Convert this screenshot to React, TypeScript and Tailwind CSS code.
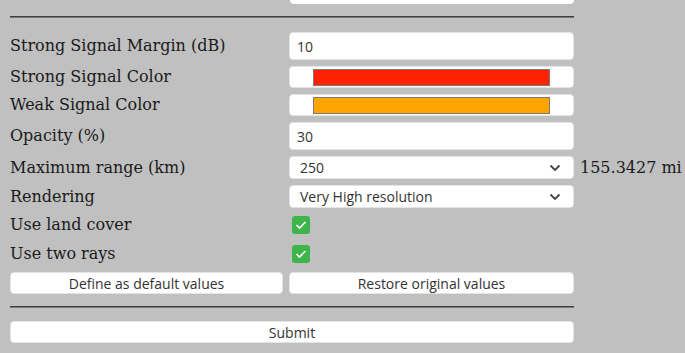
import React from 'react'

const labelCls = 'w-[279px] shrink-0 text-[16px] leading-none text-[#1a1a1a] [font-family:"DejaVu_Serif",serif]'
const ctrlFont = '[font-family:"Open_Sans",sans-serif] text-[14px] text-[#333]'

function Chevron() {
  return (
    <svg width="12" height="8" viewBox="0 0 12 8" className="absolute right-[12px] top-1/2 -translate-y-1/2">
      <path d="M1.5 1.5 L6 6 L10.5 1.5" fill="none" stroke="#444" strokeWidth="1.8" />
    </svg>
  )
}

function Check() {
  return (
    <div className="ml-[3px] w-[18px] h-[18px] rounded-[3px] bg-[#3db54a] flex items-center justify-center">
      <svg width="12" height="10" viewBox="0 0 12 10">
        <path d="M1.5 5 L4.5 8 L10.5 2" fill="none" stroke="#fff" strokeWidth="1.6" />
      </svg>
    </div>
  )
}

function Row({ label, h, mt, children, extra }: { label: string; h: number; mt: string; children: React.ReactNode; extra?: React.ReactNode }) {
  return (
    <div className={`flex items-center ${mt}`} style={{ height: h }}>
      <div className={labelCls}>{label}</div>
      <div className="w-[285px] shrink-0 h-full flex items-center">{children}</div>
      {extra}
    </div>
  )
}

export default function App() {
  const box = 'w-full h-full bg-white border border-[#e4e4e4] rounded-[4px]'
  return (
    <div className="w-[685px] h-[353px] bg-[#c0c0c0] overflow-hidden">
      <div className="pl-[10px] w-[574px]">
        <div className="ml-[280px] h-[4px] bg-white rounded-b-[4px]" />
        <div className="mt-[12px] border-t border-t-[#3c3c3c] border-b border-b-[#7a7a7a]" />

        <Row label="Strong Signal Margin (dB)" h={28} mt="mt-[14px]">
          <div className={`${box} ${ctrlFont} flex items-center pl-[7px]`}>10</div>
        </Row>
        <Row label="Strong Signal Color" h={22} mt="mt-[6px]">
          <div className={`${box} flex items-center pl-[23px]`}>
            <div className="w-[237px] h-[17px] bg-[#ff2200] border border-[#7a7a7a]" />
          </div>
        </Row>
        <Row label="Weak Signal Color" h={22} mt="mt-[6px]">
          <div className={`${box} flex items-center pl-[23px]`}>
            <div className="w-[237px] h-[17px] bg-[#ffa500] border border-[#7a7a7a]" />
          </div>
        </Row>
        <Row label="Opacity (%)" h={28} mt="mt-[6px]">
          <div className={`${box} ${ctrlFont} flex items-center pl-[7px]`}>30</div>
        </Row>
        <Row
          label="Maximum range (km)"
          h={23}
          mt="mt-[6px]"
          extra={<div className="ml-[6px] shrink-0 whitespace-nowrap text-[16px] leading-none text-[#1a1a1a] [font-family:'DejaVu_Serif',serif]">155.3427 mi</div>}
        >
          <div className={`${box} ${ctrlFont} relative flex items-center pl-[10px]`}>
            250
            <Chevron />
          </div>
        </Row>
        <Row label="Rendering" h={23} mt="mt-[6px]">
          <div className={`${box} ${ctrlFont} relative flex items-center pl-[10px]`}>
            Very High resolution
            <Chevron />
          </div>
        </Row>
        <Row label="Use land cover" h={22} mt="mt-[6px]">
          <Check />
        </Row>
        <Row label="Use two rays" h={22} mt="mt-[7px]">
          <Check />
        </Row>

        <div className={`mt-[7px] flex gap-[6px] h-[22px] ${ctrlFont}`}>
          <div className="w-[273px] bg-white border border-[#e4e4e4] rounded-[4px] flex items-center justify-center">Define as default values</div>
          <div className="flex-1 bg-white border border-[#e4e4e4] rounded-[4px] flex items-center justify-center">Restore original values</div>
        </div>

        <div className="mt-[12px] border-t border-t-[#3c3c3c] border-b border-b-[#7a7a7a]" />

        <div className={`mt-[13px] h-[22px] bg-white border border-[#e4e4e4] rounded-[4px] flex items-center justify-center ${ctrlFont}`}>Submit</div>
      </div>
    </div>
  )
}
